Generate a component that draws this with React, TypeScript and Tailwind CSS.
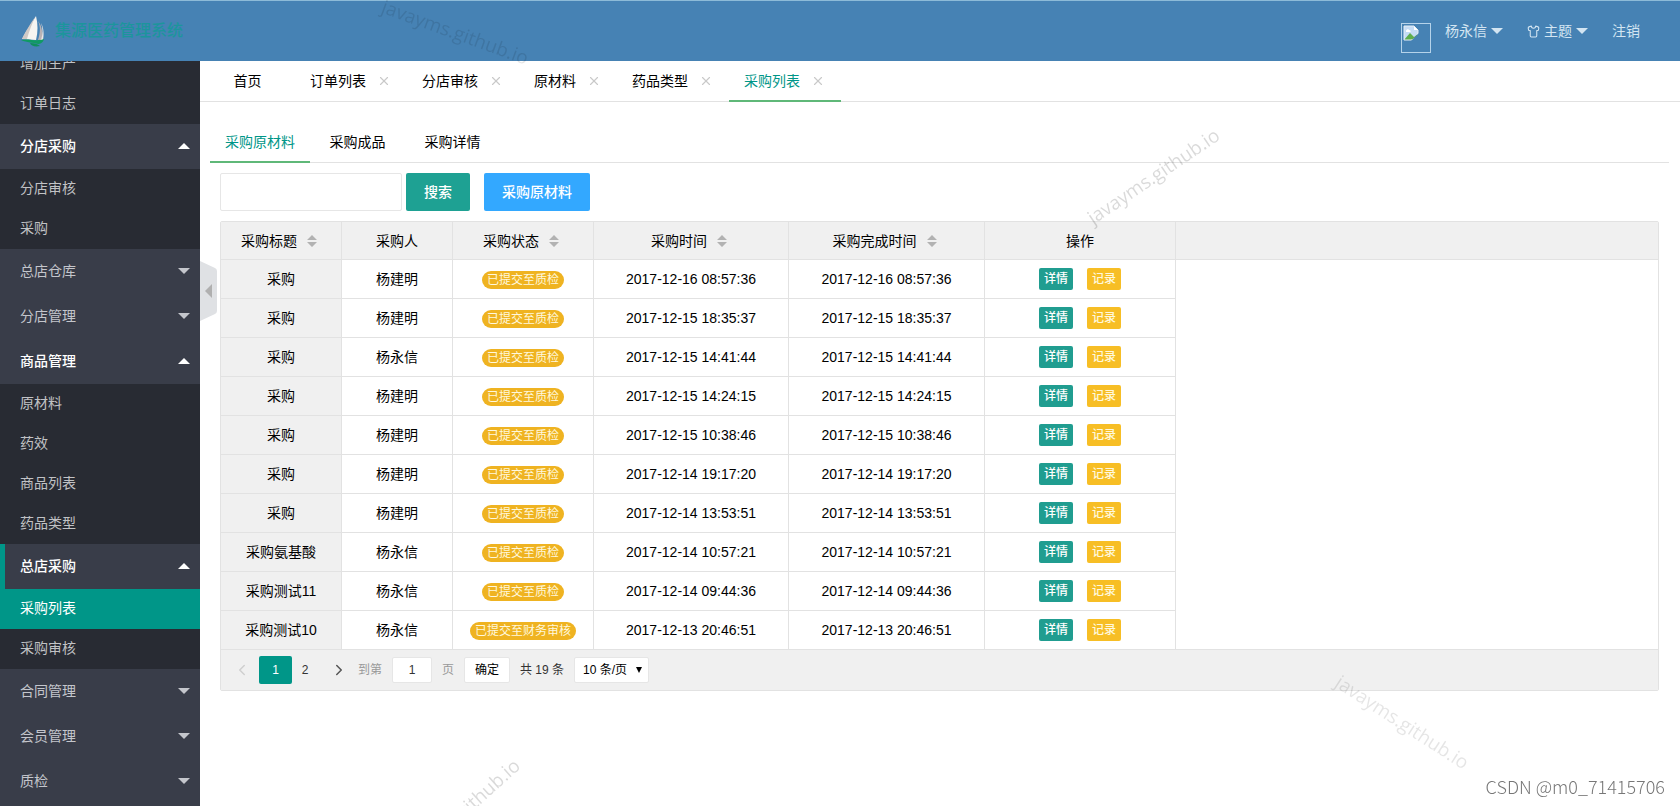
import { useEffect, useRef, useState } from 'react';
import { ChevronLeft, ChevronRight, Shirt, X } from 'lucide-react';
import { clsx } from 'clsx';

const MENU = [
  { title: '', open: true, children: ['增加生产', '订单日志'] },
  { title: '分店采购', open: true, children: ['分店审核', '采购'] },
  { title: '总店仓库', open: false, children: [] },
  { title: '分店管理', open: false, children: [] },
  { title: '商品管理', open: true, children: ['原材料', '药效', '商品列表', '药品类型'] },
  { title: '总店采购', open: true, children: ['采购列表', '采购审核'] },
  { title: '合同管理', open: false, children: [] },
  { title: '会员管理', open: false, children: [] },
  { title: '质检', open: false, children: [] },
];

const PAGE_TABS = ['首页', '订单列表', '分店审核', '原材料', '药品类型', '采购列表'];
const INNER_TABS = ['采购原材料', '采购成品', '采购详情'];

const COLUMNS = [
  { label: '采购标题', sort: true, width: 'w-[121px]' },
  { label: '采购人', sort: false, width: 'w-[111px]' },
  { label: '采购状态', sort: true, width: 'w-[141px]' },
  { label: '采购时间', sort: true, width: 'w-[195px]' },
  { label: '采购完成时间', sort: true, width: 'w-[196px]' },
  { label: '操作', sort: false, width: 'w-[191px]' },
];

const ROWS = [
  ['采购', '杨建明', '已提交至质检', '2017-12-16 08:57:36'],
  ['采购', '杨建明', '已提交至质检', '2017-12-15 18:35:37'],
  ['采购', '杨永信', '已提交至质检', '2017-12-15 14:41:44'],
  ['采购', '杨建明', '已提交至质检', '2017-12-15 14:24:15'],
  ['采购', '杨建明', '已提交至质检', '2017-12-15 10:38:46'],
  ['采购', '杨建明', '已提交至质检', '2017-12-14 19:17:20'],
  ['采购', '杨建明', '已提交至质检', '2017-12-14 13:53:51'],
  ['采购氨基酸', '杨永信', '已提交至质检', '2017-12-14 10:57:21'],
  ['采购测试11', '杨永信', '已提交至质检', '2017-12-14 09:44:36'],
  ['采购测试10', '杨永信', '已提交至财务审核', '2017-12-13 20:46:51'],
];

function Caret({ up, className }: { up?: boolean; className?: string }) {
  return (
    <svg width="12" height="6" viewBox="0 0 12 6" fill="currentColor" className={className}>
      <path d={up ? 'M0 6L6 0L12 6Z' : 'M0 0L6 6L12 0Z'} />
    </svg>
  );
}

function Logo() {
  return (
    <svg width="24" height="32" viewBox="0 0 24 32">
      <path d="M15 1C11 8 5 16 1 24L15 25C17 17 17 9 15 1Z" fill="#f6f4f1" />
      <path d="M14 2C10 8 4 17 1 24L6 24C8 16 11 9 14 2Z" fill="#cfc9c6" />
      <path d="M17 6C20 12 19 19 17 25L21 25C22 18 21 11 17 6Z" fill="#b9b2b4" />
      <path d="M20 8C23 13 23 20 22 25L20 25C22 19 22 13 20 8Z" fill="#ece8e6" />
      <path d="M0 25C7 23 16 27 23 24C22 28 19 29 17 29C12 27 6 28 0 25Z" fill="#109a63" />
      <path d="M9 28C13 28 17 29 19 31C14 32 10 31 9 28Z" fill="#0f8f5c" />
    </svg>
  );
}

function BrokenImage() {
  return (
    <svg width="16" height="16" viewBox="0 0 16 16">
      <path d="M1 1H11L15 5V15H1Z" fill="#c5dcf5" />
      <path d="M11 1V5H15Z" fill="#ffffff" />
      <path d="M3 6C3 4 6 4 6 5C8 5 8 7 7 7H3Z" fill="#ffffff" />
      <path d="M1 15L7 8L11 12L15 9V11L8 15Z" fill="#5fae4c" />
      <path d="M1 1H11L15 5V15H1Z" fill="none" stroke="#e6eef5" />
      <path d="M8 16L16 8V16Z" fill="#4682b4" />
    </svg>
  );
}

function SortIcon() {
  return (
    <svg width="10" height="12" viewBox="0 0 10 12" fill="#b2b2b2">
      <path d="M0 5L5 0L10 5ZM0 7L5 12L10 7Z" />
    </svg>
  );
}

function Header() {
  return (
    <header className="h-[61px] shrink-0 border-t border-[#8dbbd8] bg-[#4682b4] flex items-center justify-between pl-[21px] pr-10">
      <div className="flex items-center gap-2.5 text-[#1c959c]">
        <Logo />
        <h1 className="text-base font-medium">集源医药管理系统</h1>
      </div>
      <nav className="flex items-center text-sm text-[#d3e5f2]">
        <span className="w-[30px] h-[30px] mt-3.5 mr-3.5 p-px border border-[#b5d3ea]">
          <BrokenImage />
        </span>
        <a href="#user" className="flex items-center gap-1 mr-6">杨永信 <Caret /></a>
        <a href="#theme" className="flex items-center gap-1 mr-6">
          <Shirt size={13} strokeWidth={2} />主题 <Caret />
        </a>
        <a href="#logout">注销</a>
      </nav>
    </header>
  );
}

function Sidebar() {
  const scroller = useRef<HTMLElement>(null);
  const [current, setCurrent] = useState('采购列表');

  useEffect(() => {
    scroller.current?.scrollTo(0, 17);
  }, []);

  return (
    <aside ref={scroller} className="w-[200px] shrink-0 overflow-y-auto [scrollbar-width:none] bg-[#393d49] text-sm">
      <ul className="pb-10">
        {MENU.map(item => {
          const active = item.children.includes(current);
          return (
            <li key={item.title}>
              {item.title && (
                <button
                  className={clsx(
                    'w-full h-[45px] flex items-center justify-between pr-2.5 pb-0.5',
                    item.open ? 'text-white font-medium' : 'text-[#c4c6cc]',
                    active ? 'border-l-[5px] border-[#009688] pl-[15px]' : 'pl-5',
                  )}
                >
                  {item.title}
                  <Caret up={item.open} />
                </button>
              )}
              {item.open && (
                <ul className="bg-[#282b33]">
                  {item.children.map(child => (
                    <li key={child}>
                      <a
                        href="#page"
                        onClick={() => setCurrent(child)}
                        className={clsx(
                          'h-10 flex items-center pl-5 pb-0.5',
                          child === current ? 'bg-[#009688] text-white' : 'text-[#c1c2c5]',
                        )}
                      >
                        {child}
                      </a>
                    </li>
                  ))}
                </ul>
              )}
            </li>
          );
        })}
      </ul>
    </aside>
  );
}

function PageTabs() {
  return (
    <div className="h-[41px] flex border-b border-[#e2e2e2] text-sm text-black">
      {PAGE_TABS.map((tab, i) => {
        const active = tab === '采购列表';
        return (
          <div
            key={tab}
            className={clsx(
              'h-[41px] flex items-center border-b-2',
              i === 0 ? 'w-[95px] justify-center' : 'gap-2.5 px-[15px]',
              active ? 'border-[#5fb878] text-[#009688]' : 'border-transparent',
            )}
          >
            <button>{tab}</button>
            {i > 0 && (
              <button aria-label="关闭" className="w-4 flex justify-center text-[#c9c9c9]">
                <X size={14} strokeWidth={2} />
              </button>
            )}
          </div>
        );
      })}
    </div>
  );
}

function InnerTabs() {
  return (
    <div className="h-[41px] flex border-b border-[#e2e2e2] text-sm text-black">
      {INNER_TABS.map((tab, i) => (
        <button
          key={tab}
          className={clsx(
            'h-[41px] min-w-[95px] px-[15px] border-b-2',
            i === 0 ? 'border-[#5fb878] text-[#009688]' : 'border-transparent',
          )}
        >
          {tab}
        </button>
      ))}
    </div>
  );
}

function Pager() {
  return (
    <div className="h-10 flex items-center bg-[#f0f0f0] pl-3 pb-px text-xs text-[#333]">
      <button aria-label="上一页" className="text-[#cfcfcf]"><ChevronLeft size={18} /></button>
      <button className="w-[33px] h-7 ml-2 rounded-[2px] bg-[#009688] text-white">1</button>
      <button className="w-[26px] h-7">2</button>
      <button aria-label="下一页" className="ml-3 text-[#555]"><ChevronRight size={18} /></button>
      <label htmlFor="page" className="ml-2.5 text-[#999]">到第</label>
      <input id="page" defaultValue="1" className="w-10 h-[26px] mx-2.5 rounded-[2px] border border-[#e6e6e6] bg-white text-center" />
      <span className="text-[#999]">页</span>
      <button className="w-[46px] h-[26px] ml-2.5 rounded-[2px] border border-[#e6e6e6] bg-white text-black">确定</button>
      <span className="mx-2.5">共 19 条</span>
      <span className="relative">
        <select aria-label="每页条数" className="w-[75px] h-[26px] pl-2 appearance-none rounded-[2px] border border-[#e6e6e6] bg-white text-black">
          <option>10 条/页</option>
        </select>
        <svg width="6" height="6" viewBox="0 0 6 6" className="absolute right-[7px] top-2.5 pointer-events-none">
          <path d="M0 0H6L3 6Z" />
        </svg>
      </span>
    </div>
  );
}

function PurchaseTable() {
  return (
    <div className="border border-[#e2e2e2] rounded-[2px] text-sm text-black">
      <div className="border-b border-[#e2e2e2] bg-[linear-gradient(#f0f0f0_37px,#e2e2e2_37px,#e2e2e2_38px,#fff_38px)]">
        <table className="w-[955px] table-fixed border-separate border-spacing-0">
          <thead>
            <tr className="h-[38px]">
              {COLUMNS.map(col => (
                <th key={col.label} className={clsx(col.width, 'p-0 font-normal bg-[#f0f0f0] border-r border-b border-[#e2e2e2]')}>
                  <span className={clsx('flex items-center justify-center gap-2.5', col.sort && 'pr-1')}>
                    {col.label}
                    {col.sort && <SortIcon />}
                  </span>
                </th>
              ))}
            </tr>
          </thead>
          <tbody className="text-center">
            {ROWS.map(([title, person, status, time]) => (
              <tr key={time} className="h-[39px] last:h-[38px] [&>td]:p-0 [&>td]:border-r [&>td]:border-b [&>td]:border-[#e2e2e2] last:[&>td]:border-b-0">
                <td className="bg-[#f0f0f0]">{title}</td>
                <td>{person}</td>
                <td>
                  <span className="inline-flex items-center h-[18px] px-[5px] rounded-full bg-[#efb321] text-xs text-[#fff8dc] align-middle">
                    {status}
                  </span>
                </td>
                <td>{time}</td>
                <td>{time}</td>
                <td>
                  <span className="flex justify-center gap-3.5 text-xs text-white font-medium">
                    <button className="h-[22px] px-[5px] rounded-[2px] bg-[#209d90]">详情</button>
                    <button className="h-[22px] px-[5px] rounded-[2px] bg-[#f7be25] text-[#fff8dc]">记录</button>
                  </span>
                </td>
              </tr>
            ))}
          </tbody>
        </table>
      </div>
      <Pager />
    </div>
  );
}

function Watermarks() {
  const text = 'javayms.github.io';
  return (
    <div className="absolute inset-0 overflow-hidden pointer-events-none font-['Open_Sans',sans-serif] text-[19px] leading-6 text-black/15">
      <span className="absolute left-[378px] top-[20px] rotate-[20deg] text-black/10">{text}</span>
      <span className="absolute left-[1076px] top-[164px] rotate-[-34deg]">{text}</span>
      <span className="absolute left-[1325px] top-[710px] rotate-[33deg] text-black/10">{text}</span>
      <span className="absolute left-[382px] top-[802px] rotate-[-42deg]">{text}</span>
      <span className="absolute right-[15px] bottom-2 font-['Noto_Sans_CJK_SC',sans-serif] text-lg leading-6 font-light text-[#777]">
        CSDN @m0_71415706
      </span>
    </div>
  );
}

export default function App() {
  return (
    <div className="relative h-screen flex flex-col bg-white font-['Liberation_Sans','Noto_Sans_CJK_SC',sans-serif]">
      <Header />
      <div className="flex-1 min-h-0 flex">
        <Sidebar />
        <main className="relative flex-1 min-w-0">
          <button aria-label="收起菜单" className="absolute left-0 top-[200px]">
            <svg width="17" height="60" viewBox="0 0 17 60">
              <path d="M0 0L15 7Q17 8 17 10V50Q17 52 15 53L0 60Z" fill="#dfe1e4" />
              <path d="M5 30L12 23V37Z" fill="#b0b0b0" />
            </svg>
          </button>
          <PageTabs />
          <div className="pt-5 pl-2.5 pr-[11px]">
            <InnerTabs />
            <div className="pt-2.5 px-2.5">
              <form className="flex mb-2.5 text-sm" onSubmit={e => e.preventDefault()}>
                <input aria-label="搜索" className="w-[182px] h-[38px] px-2.5 rounded-[2px] border border-[#e6e6e6] bg-white" />
                <button className="h-[38px] ml-1 px-[18px] rounded-[2px] bg-[#1ea193] text-white font-medium">搜索</button>
                <button type="button" className="h-[38px] ml-3.5 px-[18px] rounded-[2px] bg-[#33a8ff] text-white font-medium">采购原材料</button>
              </form>
              <PurchaseTable />
            </div>
          </div>
        </main>
      </div>
      <Watermarks />
    </div>
  );
}
